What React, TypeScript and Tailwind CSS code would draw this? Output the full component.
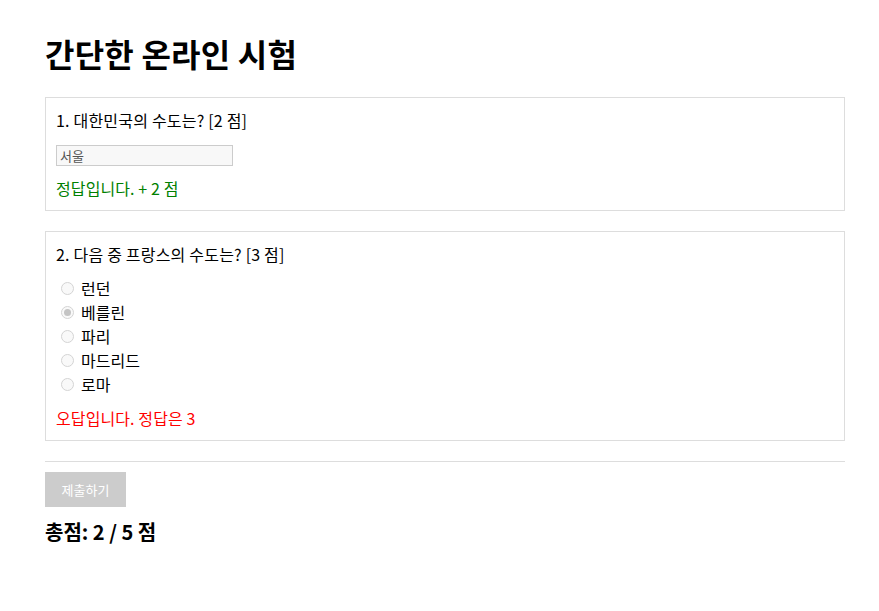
const FONT = "font-['Noto_Sans_CJK_KR','Noto_Sans',sans-serif]"

const OPTIONS = ['런던', '베를린', '파리', '마드리드', '로마']

export default function App() {
  return (
    <div className={`${FONT} min-h-screen bg-white pl-[45px] pt-[29px] text-black`}>
      <div className="w-[800px]">
        <h1 className="text-[32px] font-bold leading-[48px] tracking-[0.2px]">간단한 온라인 시험</h1>

        <div className="mt-[20px] border border-[#dddddd] px-[10px] py-[10px]">
          <p className="text-[16px] leading-[24px] tracking-[0.2px]">1. 대한민국의 수도는? [2 점]</p>
          <input
            type="text"
            value="서울"
            disabled
            readOnly
            className="mt-[13px] block h-[21px] w-[177px] border border-[#cccccc] bg-[#f8f8f8] px-[3px] text-[13px] leading-[19px] text-[#555555] outline-none"
          />
          <p className="mt-[10px] text-[16px] leading-[24px] tracking-[0.1px] text-[#008000]">정답입니다. + 2 점</p>
        </div>

        <div className="mt-[20px] border border-[#dddddd] px-[10px] py-[10px]">
          <p className="text-[16px] leading-[24px] tracking-[0.2px]">2. 다음 중 프랑스의 수도는? [3 점]</p>
          <div className="mt-[10px] flex flex-col">
            {OPTIONS.map((opt, i) => (
              <label key={opt} className="flex h-[24px] items-center text-[16px] leading-[24px]">
                <span className="ml-[5px] mr-[7px] flex h-[13px] w-[13px] items-center justify-center rounded-full border border-[#d4d4d4] bg-[#f9f9f9]">
                  {i === 1 && <span className="h-[7px] w-[7px] rounded-full bg-[#c4c4c4]" />}
                </span>
                {opt}
              </label>
            ))}
          </div>
          <p className="mt-[10px] text-[16px] leading-[24px] tracking-[0.1px] text-[#ff0000]">오답입니다. 정답은 3</p>
        </div>

        <div className="mt-[20px] h-px bg-[#dddddd]" />

        <button
          type="button"
          disabled
          className="mt-[10px] h-[35px] w-[81px] bg-[#cccccc] text-[13px] text-white"
        >
          제출하기
        </button>

        <p className="mt-[10px] text-[20px] font-bold leading-[30px]">총점: 2 / 5 점</p>
      </div>
    </div>
  )
}
